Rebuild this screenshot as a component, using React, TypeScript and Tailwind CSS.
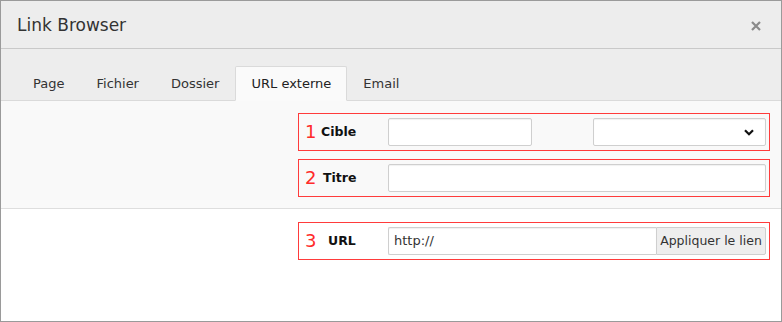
import React from 'react';

const tabs = ['Page', 'Fichier', 'Dossier', 'URL externe', 'Email'];

const Row: React.FC<{ n: string; label: string; labelPad: string; children: React.ReactNode }> = ({ n, label, labelPad, children }) => (
  <div className="ml-[297px] w-[472px] border border-[#ff3b3b] flex items-center py-[4px] pl-[6px]">
    <span className="w-[16px] text-[18px] leading-[28px] text-[#ff2a2a]">{n}</span>
    <span className={`w-[67px] text-[12.5px] font-bold text-[#111] ${labelPad}`}>{label}</span>
    {children}
  </div>
);

const inputCls = 'h-[28px] border border-[#cfcfcf] rounded-[2px] bg-white shadow-[inset_0_1px_1px_rgba(0,0,0,0.06)]';

export default function App() {
  return (
    <div className="w-[782px] h-[322px] border border-[#9a9a9a] bg-white flex flex-col font-['DejaVu_Sans',sans-serif] text-[#333]">
      <div className="h-[48px] flex-shrink-0 bg-[#ededed] border-b border-[#c9c9c9] flex items-center justify-between pl-[16px] pr-[20px]">
        <h1 className="text-[17px] text-[#333] mt-[2px]">Link Browser</h1>
        <svg className="w-[10px] h-[10px] mt-[2px]" viewBox="0 0 10 10">
          <path d="M1 1L9 9M9 1L1 9" stroke="#8a8a8a" strokeWidth="2.2" />
        </svg>
      </div>

      <div className="h-[52px] flex-shrink-0 bg-[#ededed] border-b border-[#dadada] flex items-end pl-[16px]">
        {tabs.map(t => (
          <div
            key={t}
            className={`h-[35px] -mb-px px-[13px] text-[13px] flex items-center border rounded-t-[2px] ${t === 'URL externe' ? 'bg-[#fafafa] border-[#dadada] border-b-[#fafafa] text-[#222]' : 'border-transparent'}`}
          >
            <span className="px-[2px] mt-[1px]">{t}</span>
          </div>
        ))}
      </div>

      <div className="h-[108px] flex-shrink-0 bg-[#f9f9f9] border-b border-[#dedede] pt-[12px] flex flex-col gap-[8px]">
        <Row n="1" label="Cible" labelPad="pl-[0px]">
          <div className={`${inputCls} w-[144px]`} />
          <div className={`${inputCls} w-[173px] ml-[61px] flex items-center justify-end pr-[11px]`}>
            <svg className="w-[10px] h-[7px]" viewBox="0 0 10 7">
              <path d="M1 1.2L5 5.2L9 1.2" fill="none" stroke="#111" strokeWidth="2.2" />
            </svg>
          </div>
        </Row>
        <Row n="2" label="Titre" labelPad="pl-[2px]">
          <div className={`${inputCls} w-[378px]`} />
        </Row>
      </div>

      <div className="flex-1 pt-[13px]">
        <Row n="3" label="URL" labelPad="pl-[7px]">
          <div className={`${inputCls} w-[268px] rounded-r-none border-r-0 flex items-center pl-[5px] text-[13px] text-[#333]`}>http://</div>
          <div className="h-[28px] w-[110px] border border-[#cfcfcf] rounded-r-[2px] bg-[#eeeeee] flex items-center justify-center text-[12.5px] text-[#333] whitespace-nowrap">
            Appliquer le lien
          </div>
        </Row>
      </div>
    </div>
  );
}
